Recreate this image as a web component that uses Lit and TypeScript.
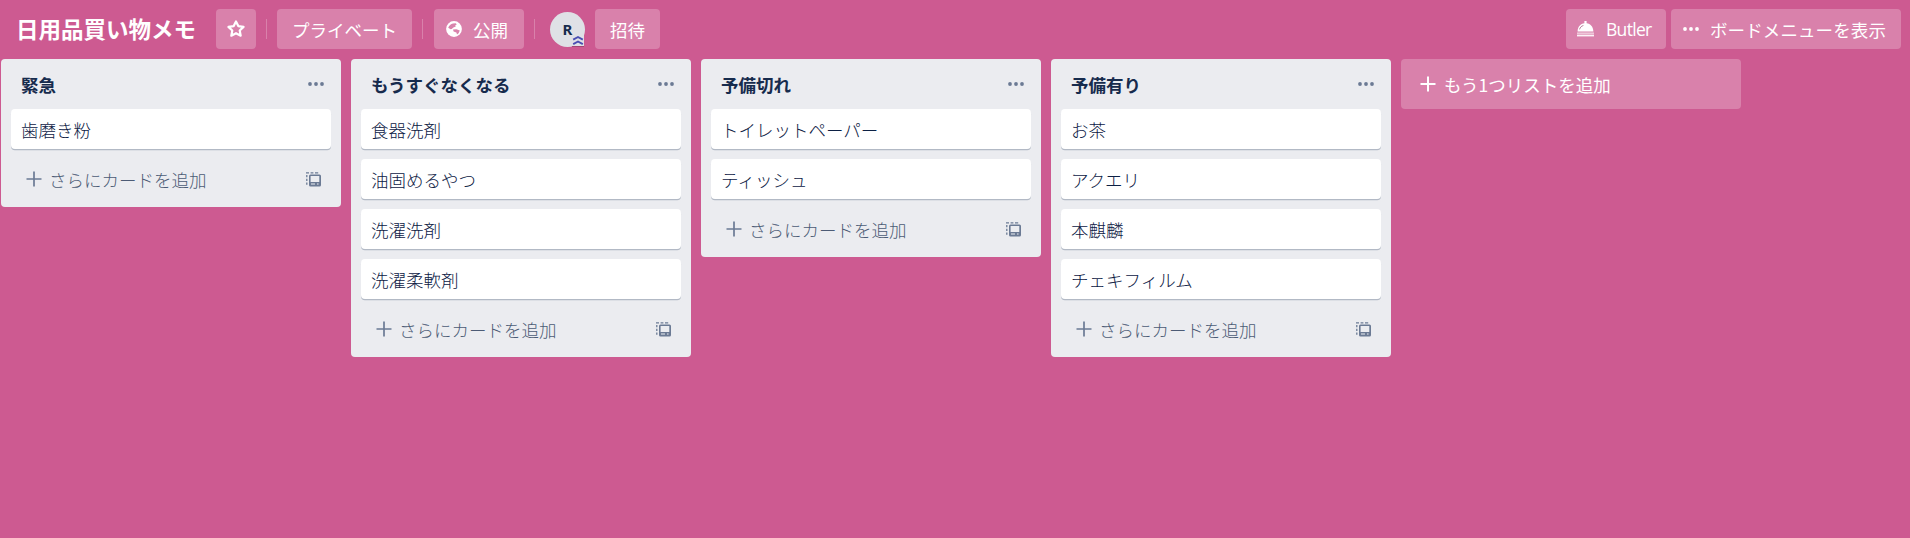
import { LitElement, html, css, svg } from "lit";
import { customElement, property } from "lit/decorators.js";

interface BoardList {
  title: string;
  cards: string[];
}

const lists: BoardList[] = [
  { title: "緊急", cards: ["歯磨き粉"] },
  { title: "もうすぐなくなる", cards: ["食器洗剤", "油固めるやつ", "洗濯洗剤", "洗濯柔軟剤"] },
  { title: "予備切れ", cards: ["トイレットペーパー", "ティッシュ"] },
  { title: "予備有り", cards: ["お茶", "アクエリ", "本麒麟", "チェキフィルム"] },
];

const dots = html`<svg width="16" height="4" viewBox="0 0 16 4" fill="currentColor">
  ${[2, 8, 14].map((x) => svg`<circle cx=${x} cy="2" r="1.9" />`)}
</svg>`;

const plus = (w: number) => html`<svg width="16" height="16" viewBox="0 0 16 16" stroke="currentColor" stroke-width=${w}>
  <path d="M8 .5V15.5M.5 8H15.5" />
</svg>`;

const star = html`<svg width="20" height="20" viewBox="0 0 20 20" fill="none" stroke="currentColor" stroke-width="2.2" stroke-linejoin="round">
  <path d="M10 2.4L12.3 7.1L17.6 7.9L13.7 11.5L14.7 16.7L10 14.2L5.3 16.7L6.3 11.5L2.4 7.9L7.7 7.1Z" />
</svg>`;

const globe = html`<svg width="16" height="16" viewBox="0 0 16 16">
  <circle cx="8" cy="8" r="7.9" fill="currentColor" />
  <path d="M2.2 6.8C3 4.4 4.8 3 7 2.4L9.6 2.2L10.8 3.2L9.2 4.6L9.8 5.6L7.4 6.6L5.8 8L4.6 8.2ZM7 8.4L10.4 8.2L13.8 9.4L12.6 12.2L11 13.4L10.4 11.4L7.6 10.4Z" fill="#d983ac" />
</svg>`;

const bell = html`<svg width="17" height="16" viewBox="0 0 17 16" fill="currentColor">
  <path d="M7.4 0H9.6V2.3C13.4 2.7 16.2 5.6 16.4 10.6H.6C.8 5.6 3.6 2.7 7.4 2.3Z" />
  <path d="M0 11.4H17V13H0Z" opacity=".55" />
  <path d="M0 13.6H17V15.4H0Z" opacity=".9" />
  <path d="M2.6 8.4C3 6.4 4.4 5 6.4 4.5" fill="none" stroke="#b9839c" stroke-width="1" />
</svg>`;

const template = html`<svg width="15" height="15" viewBox="0 0 15 15" fill="currentColor">
  <path fill-rule="evenodd" d="M4.5 2.5H13.5Q15 2.5 15 4V13Q15 14.5 13.5 14.5H4.5Q3 14.5 3 13V4Q3 2.5 4.5 2.5ZM4.6 4V10H13.3V4ZM5 11.5V12.6H9V11.5ZM11 11.5V12.6H12.6V11.5Z" />
  <path d="M0 .9H3M4.6 .9H7.4M9 .9H12.2M.8 3V5.2M.8 6.8V9M.8 10.6V12.8" fill="none" stroke="currentColor" stroke-width="1.3" />
</svg>`;

const chevrons = html`<svg width="12" height="11" viewBox="0 0 12 11" fill="none" stroke="#4a4fb3" stroke-width="1.9">
  <path d="M1.2 4.7L6 2L10.8 4.7M1.2 9.2L6 6.5L10.8 9.2" />
</svg>`;

@customElement("board-list")
class BoardListElement extends LitElement {
  @property({ attribute: false }) list!: BoardList;

  static styles = css`
    :host {
      display: block;
      box-sizing: border-box;
      width: 340px;
      flex: none;
      padding: 0 10px;
      background: #ebecf0;
      border-radius: 4px;
      color: #172b4d;
    }
    svg {
      display: block;
      flex: none;
    }
    .head {
      display: flex;
      align-items: center;
      justify-content: space-between;
      height: 50px;
      padding: 0 7px 0 10px;
      font-weight: 700;
    }
    .head svg,
    .foot {
      color: #6b7a94;
    }
    .cards {
      display: grid;
      gap: 10px;
    }
    .card {
      height: 40px;
      line-height: 42px;
      padding: 0 10px;
      background: #fff;
      border-radius: 4px;
      box-shadow: 0 1.25px 0 rgba(9, 30, 66, 0.25);
      color: #0c2044;
      font-weight: 300;
    }
    .foot {
      display: flex;
      align-items: center;
      height: 58px;
      padding: 0 10px 0 15px;
      box-sizing: border-box;
    }
    .foot-row {
      display: flex;
      align-items: center;
      width: 100%;
      gap: 7px;
      height: 40px;
      margin-top: 2px;
    }
    .label {
      flex: 1;
      color: #4c5b75;
      font-weight: 300;
    }
  `;

  render() {
    return html`
      <div class="head"><span>${this.list.title}</span>${dots}</div>
      <div class="cards">${this.list.cards.map((c) => html`<div class="card">${c}</div>`)}</div>
      <div class="foot">
        <div class="foot-row">${plus(1.7)}<span class="label">さらにカードを追加</span>${template}</div>
      </div>
    `;
  }
}

@customElement("app-root")
class AppRoot extends LitElement {
  static styles = css`
    :host {
      display: block;
      height: 538px;
      overflow: hidden;
      background: #cd5a91;
      color: #fff;
      font: 17.5px/25px "Noto Sans CJK JP", "Noto Sans", sans-serif;
      white-space: nowrap;
    }
    svg {
      display: block;
      flex: none;
    }
    .header {
      display: flex;
      align-items: center;
      height: 59px;
      box-sizing: border-box;
      padding: 9px 9px 10px 16px;
    }
    .title {
      width: 200px;
      font-size: 22.5px;
      font-weight: 700;
      flex: none;
      margin-top: -2px;
    }
    .btn {
      display: flex;
      align-items: center;
      box-sizing: border-box;
      height: 40px;
      border-radius: 4px;
      background: rgba(255, 255, 255, 0.24);
      flex: none;
    }
    .star {
      width: 40px;
      justify-content: center;
    }
    .private {
      width: 135px;
      justify-content: center;
    }
    .public {
      width: 90px;
      margin-left: 1px;
      padding-left: 12px;
      gap: 11px;
    }
    .invite {
      width: 65px;
      justify-content: center;
    }
    .sep {
      width: 1px;
      height: 20px;
      margin: 0 10px;
      background: rgba(255, 255, 255, 0.24);
    }
    .avatar {
      position: relative;
      width: 35px;
      height: 35px;
      margin: 0 10px 0 5px;
      border-radius: 50%;
      background: #dfe1e6;
      color: #172b4d;
      font: 700 15px/35px "Noto Sans", sans-serif;
      text-align: center;
    }
    .badge {
      position: absolute;
      right: 1px;
      bottom: 0;
      border-bottom: 1px solid #a34775;
      background: #dfe1e6;
    }
    .right {
      display: flex;
      gap: 5px;
      margin-left: auto;
    }
    .butler {
      width: 100px;
      padding-left: 11px;
      gap: 12px;
      font-family: "Open Sans", sans-serif;
      letter-spacing: -0.7px;
    }
    .menu {
      width: 230px;
      padding-left: 12px;
      gap: 11px;
      letter-spacing: 0.1px;
    }
    .board {
      display: flex;
      align-items: flex-start;
      gap: 10px;
      padding-left: 1px;
    }
    .add {
      display: flex;
      align-items: center;
      gap: 8px;
      box-sizing: border-box;
      width: 340px;
      height: 50px;
      padding-left: 19px;
      border-radius: 4px;
      background: rgba(255, 255, 255, 0.24);
    }
  `;

  render() {
    return html`
      <header class="header">
        <div class="title">日用品買い物メモ</div>
        <div class="btn star">${star}</div>
        <div class="sep"></div>
        <div class="btn private">プライベート</div>
        <div class="sep"></div>
        <div class="btn public">${globe}<span>公開</span></div>
        <div class="sep"></div>
        <div class="avatar">R<div class="badge">${chevrons}</div></div>
        <div class="btn invite">招待</div>
        <div class="right">
          <div class="btn butler">${bell}<span>Butler</span></div>
          <div class="btn menu">${dots}<span>ボードメニューを表示</span></div>
        </div>
      </header>
      <main class="board">
        ${lists.map((l) => html`<board-list .list=${l}></board-list>`)}
        <div class="add">${plus(2)}<span>もう1つリストを追加</span></div>
      </main>
    `;
  }
}
